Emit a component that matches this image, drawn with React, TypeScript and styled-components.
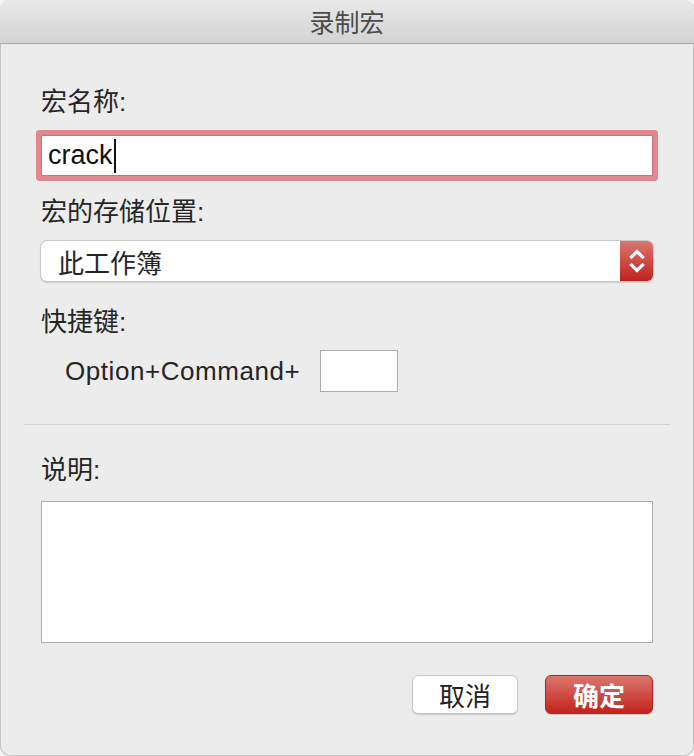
import React from "react";
import styled, { createGlobalStyle } from "styled-components";

const Global = createGlobalStyle`
  html, body {
    margin: 0;
    padding: 0;
    background: #f4f4f4;
  }
  * { box-sizing: border-box; }
`;

const FONT = `"Liberation Sans", "Noto Sans CJK SC", sans-serif`;

const Window = styled.div`
  width: 694px;
  height: 756px;
  background: #ececec;
  border-radius: 10px;
  overflow: hidden;
  box-shadow: inset 0 0 0 1px #c4c4c4;
  font-family: ${FONT};
  color: #252525;
  display: flex;
  flex-direction: column;
`;

const TitleBar = styled.header`
  height: 44px;
  flex: none;
  background: linear-gradient(#e9e9e9, #d3d3d3);
  border-bottom: 1px solid #a9a9a9;
  display: flex;
  align-items: center;
  justify-content: center;
  font-size: 25px;
  color: #4b4b4b;
  padding-bottom: 1px;
`;

const Body = styled.main`
  padding: 43px 41px 0;
  display: flex;
  flex-direction: column;
`;

const Label = styled.div<{ $gap?: number }>`
  font-size: 26px;
  line-height: 30px;
  height: 30px;
  margin-bottom: ${(p) => p.$gap ?? 14}px;
`;

const TextInput = styled.div`
  height: 41px;
  background: #fff;
  border: 1px solid #c87377;
  box-shadow: 0 0 0 5px #e0888c;
  border-radius: 1px;
  display: flex;
  align-items: center;
  padding-left: 6px;
  font-size: 27px;
  color: #111;
  margin-bottom: 21px;
`;

const Caret = styled.span`
  display: inline-block;
  width: 2px;
  height: 34px;
  background: #111;
  margin-left: 1px;
`;

const Select = styled.div`
  height: 40px;
  background: #fff;
  border-radius: 6px;
  box-shadow: 0 0 0 1px #c9c9c9, 0 1px 1px 1px rgba(0, 0, 0, 0.12);
  display: flex;
  align-items: center;
  overflow: hidden;
  margin-bottom: 26px;
`;

const SelectText = styled.span`
  flex: 1;
  padding-left: 17px;
  font-size: 26px;
`;

const Stepper = styled.span`
  width: 33px;
  align-self: stretch;
  background: linear-gradient(#da7671, #c1211c);
  display: flex;
  align-items: center;
  justify-content: center;
`;

const ShortcutRow = styled.div`
  display: flex;
  align-items: center;
  gap: 20px;
  padding-left: 24px;
  height: 42px;
  margin-bottom: 32px;
`;

const ShortcutText = styled.span`
  font-size: 26px;
  letter-spacing: 0.55px;
`;

const KeyBox = styled.div`
  width: 78px;
  height: 42px;
  background: #fff;
  border: 1px solid #ababab;
`;

const Separator = styled.hr`
  border: none;
  height: 1px;
  background: #d2d2d2;
  margin: 0 -17px 30px;
`;

const TextArea = styled.div`
  height: 142px;
  background: #fff;
  border: 1px solid #acacac;
  margin-bottom: 32px;
`;

const Buttons = styled.div`
  display: flex;
  justify-content: flex-end;
  gap: 27px;
`;

const Button = styled.button<{ $primary?: boolean }>`
  width: ${(p) => (p.$primary ? 108 : 106)}px;
  height: 39px;
  border-radius: 6px;
  font-family: ${FONT};
  font-size: 26px;
  padding: 0;
  border: 1px solid ${(p) => (p.$primary ? "#b8201c" : "#c6c6c6")};
  color: ${(p) => (p.$primary ? "#fff" : "#222")};
  font-weight: ${(p) => (p.$primary ? 700 : 400)};
  background: ${(p) => (p.$primary ? "linear-gradient(#dc776f, #c2221c)" : "#fff")};
  box-shadow: 0 1px 1px rgba(0, 0, 0, 0.15);
`;

const Chevrons = () => (
  <svg width="18" height="30" viewBox="0 0 18 30" fill="none" stroke="#fff" strokeWidth="3.2" strokeLinecap="square" strokeLinejoin="miter">
    <path d="M3.5 11 L9 5.5 L14.5 11" />
    <path d="M3.5 19 L9 24.5 L14.5 19" />
  </svg>
);

export default function App() {
  return (
    <>
      <Global />
      <Window>
        <TitleBar>录制宏</TitleBar>
        <Body>
          <Label $gap={18}>宏名称:</Label>
          <TextInput>
            crack
            <Caret />
          </TextInput>
          <Label>宏的存储位置:</Label>
          <Select>
            <SelectText>此工作簿</SelectText>
            <Stepper>
              <Chevrons />
            </Stepper>
          </Select>
          <Label $gap={13}>快捷键:</Label>
          <ShortcutRow>
            <ShortcutText>Option+Command+</ShortcutText>
            <KeyBox />
          </ShortcutRow>
          <Separator />
          <Label $gap={16}>说明:</Label>
          <TextArea />
          <Buttons>
            <Button>取消</Button>
            <Button $primary>确定</Button>
          </Buttons>
        </Body>
      </Window>
    </>
  );
}
